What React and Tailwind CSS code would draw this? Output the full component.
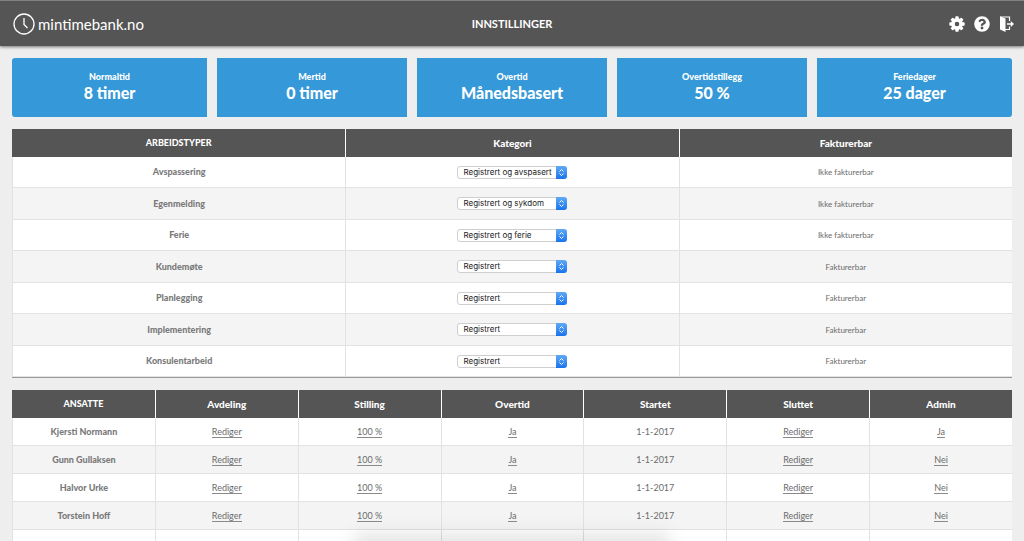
import { useState } from 'react'
import { FaQuestionCircle } from 'react-icons/fa'

const stats = [
  { label: 'Normaltid', value: '8 timer' },
  { label: 'Mertid', value: '0 timer' },
  { label: 'Overtid', value: 'Månedsbasert' },
  { label: 'Overtidstillegg', value: '50 %' },
  { label: 'Feriedager', value: '25 dager' },
]

const categories = ['Registrert', 'Registrert og avspasert', 'Registrert og sykdom', 'Registrert og ferie']

const workTypes = [
  { name: 'Avspassering', category: 'Registrert og avspasert', billable: false },
  { name: 'Egenmelding', category: 'Registrert og sykdom', billable: false },
  { name: 'Ferie', category: 'Registrert og ferie', billable: false },
  { name: 'Kundemøte', category: 'Registrert', billable: true },
  { name: 'Planlegging', category: 'Registrert', billable: true },
  { name: 'Implementering', category: 'Registrert', billable: true },
  { name: 'Konsulentarbeid', category: 'Registrert', billable: true },
]

const employees = [
  { name: 'Kjersti Normann', admin: 'Ja' },
  { name: 'Gunn Gullaksen', admin: 'Nei' },
  { name: 'Halvor Urke', admin: 'Nei' },
  { name: 'Torstein Hoff', admin: 'Nei' },
]

const employeeColumns = ['Avdeling', 'Stilling', 'Overtid', 'Startet', 'Sluttet', 'Admin']

const titleCell = 'p-0 text-center text-[9px] leading-4 font-black text-white'
const headCell = 'border-l border-white p-0 text-center text-[10px] leading-4 font-black text-white'
const bodyCell = 'border-l border-b border-[#e2e2e2] p-0 text-center leading-4 text-[#6b6b6b]'
const nameCell = 'border-l border-b border-[#e2e2e2] p-0 text-center text-[9px] leading-4 font-black text-[#7a7a7a]'

function GearIcon() {
  return (
    <svg viewBox="0 0 16 16" className="h-4 w-4" fill="currentColor" aria-hidden="true">
      {[0, 45, 90, 135].map(a => (
        <rect key={a} x="6.3" y="0.3" width="3.4" height="15.4" rx="0.8" transform={`rotate(${a} 8 8)`}
          mask="url(#gear-hole)" />
      ))}
      <circle cx="8" cy="8" r="4.2" fill="none" stroke="currentColor" strokeWidth="3.4" />
      <mask id="gear-hole" maskUnits="userSpaceOnUse" x="-8" y="-8" width="32" height="32">
        <rect x="-8" y="-8" width="32" height="32" fill="white" />
        <circle cx="8" cy="8" r="2.5" fill="black" />
      </mask>
    </svg>
  )
}

function ExitIcon() {
  return (
    <svg viewBox="0 0 16 16" className="h-4 w-4" fill="currentColor" aria-hidden="true">
      <path d="M1 0.5 6.5 2.5V16L1 13.5Z" />
      <path d="M1 1H10.5V5M10.5 10.5V13.5H6" fill="none" stroke="currentColor" strokeWidth="1.2" />
      <path d="M8 7.2H11.8V5L15 8 11.8 11V8.8H8Z" />
    </svg>
  )
}

function CategorySelect({ label, initial }) {
  const [value, setValue] = useState(initial)

  return (
    <div className="relative mx-auto h-[13px] w-[110px]">
      <select aria-label={label} value={value} onChange={e => setValue(e.target.value)}
        className="block h-full w-full appearance-none rounded-[3px] border border-[#cfcfcf] bg-white pr-3 pl-[5px] font-[Inter,sans-serif] text-[8px] leading-[11px] text-[#222]">
        {categories.map(c => <option key={c}>{c}</option>)}
      </select>
      <span className="pointer-events-none absolute top-0 right-0 flex h-[13px] w-[11px] items-center justify-center rounded-r-[3px] bg-linear-to-b from-[#5fa9f5] to-[#1673ee]">
        <svg viewBox="0 0 7 9" className="h-[9px] w-[7px]" fill="none" stroke="white" strokeWidth="1" aria-hidden="true">
          <path d="M1.5 3.5 3.5 1.5 5.5 3.5M1.5 5.5 3.5 7.5 5.5 5.5" />
        </svg>
      </span>
    </div>
  )
}

function EditLink({ children }) {
  return <a href="#" className="inline-block border-b border-[#8a8a8a] leading-[10px]">{children}</a>
}

export default function App() {
  return (
    <div className="relative h-screen overflow-hidden bg-[#eee] font-[Lato,sans-serif]">
      <header className="grid h-[46px] grid-cols-3 items-center border-t border-[#828282] bg-[#555] text-white shadow-[0_1px_3px_rgba(0,0,0,0.5)]">
        <a href="#" className="flex items-center gap-[3px] pl-[13px] text-[15px] leading-5">
          <svg viewBox="0 0 22 22" className="h-[22px] w-[22px]" fill="none" stroke="currentColor" strokeWidth="1.3" aria-hidden="true">
            <circle cx="11" cy="11" r="10" />
            <path d="M11 5V11.5L14.5 15" />
          </svg>
          mintimebank.no
        </a>
        <h1 className="text-center text-[11px] leading-4 font-bold">INNSTILLINGER</h1>
        <nav className="flex items-center justify-end gap-[9px] pr-[9px]">
          <button aria-label="Innstillinger"><GearIcon /></button>
          <button aria-label="Hjelp"><FaQuestionCircle className="h-4 w-4" /></button>
          <button aria-label="Logg ut"><ExitIcon /></button>
        </nav>
      </header>

      <main className="px-3 pt-3">
        <section className="grid grid-cols-5">
          {stats.map(s => (
            <div key={s.label} className="group px-[5px] first:pl-0 last:pr-0">
              <div className="flex h-[59px] flex-col items-center justify-center bg-[#3598d8] pb-0.5 text-white group-first:rounded-l-[3px] group-last:rounded-r-[3px]">
                <p className="text-[9px] leading-3 font-black">{s.label}</p>
                <p className="text-base leading-5 font-black">{s.value}</p>
              </div>
            </div>
          ))}
        </section>

        {/* Work types */}
        <table className="mt-3 w-full table-fixed border-separate border-spacing-0 border-b border-[#999] bg-white">
          <thead className="bg-[#555]">
            <tr className="h-7">
              <th className={titleCell}>ARBEIDSTYPER</th>
              <th className={headCell}>Kategori</th>
              <th className={headCell}>Fakturerbar</th>
            </tr>
          </thead>
          <tbody className="text-[8px]">
            {workTypes.map(t => (
              <tr key={t.name} className="odd:h-[31px] even:h-8 even:bg-[#f4f4f4]">
                <th scope="row" className={nameCell}>{t.name}</th>
                <td className={bodyCell}><CategorySelect label={`Kategori for ${t.name}`} initial={t.category} /></td>
                <td className={bodyCell}>{t.billable ? 'Fakturerbar' : 'Ikke fakturerbar'}</td>
              </tr>
            ))}
          </tbody>
        </table>

        {/* Employees */}
        <table className="mt-3 w-full table-fixed border-separate border-spacing-0 bg-white">
          <thead className="bg-[#555]">
            <tr className="h-7">
              <th className={titleCell}>ANSATTE</th>
              {employeeColumns.map(c => <th key={c} className={headCell}>{c}</th>)}
            </tr>
          </thead>
          <tbody className="text-[9px]">
            {employees.map(e => (
              <tr key={e.name} className="h-7 even:bg-[#f4f4f4]">
                <th scope="row" className={nameCell}>{e.name}</th>
                <td className={bodyCell}><EditLink>Rediger</EditLink></td>
                <td className={bodyCell}><EditLink>100 %</EditLink></td>
                <td className={bodyCell}><EditLink>Ja</EditLink></td>
                <td className={bodyCell}>1-1-2017</td>
                <td className={bodyCell}><EditLink>Rediger</EditLink></td>
                <td className={bodyCell}><EditLink>{e.admin}</EditLink></td>
              </tr>
            ))}
            <tr className="h-7">
              {['name', ...employeeColumns].map(c => <td key={c} className={bodyCell} />)}
            </tr>
          </tbody>
        </table>
      </main>

      {/* Soft shade along the bottom edge */}
      <div className="pointer-events-none absolute inset-x-0 -bottom-3 mx-auto h-5 w-[320px] rounded-full bg-black/10 blur-[8px]" />
    </div>
  )
}
